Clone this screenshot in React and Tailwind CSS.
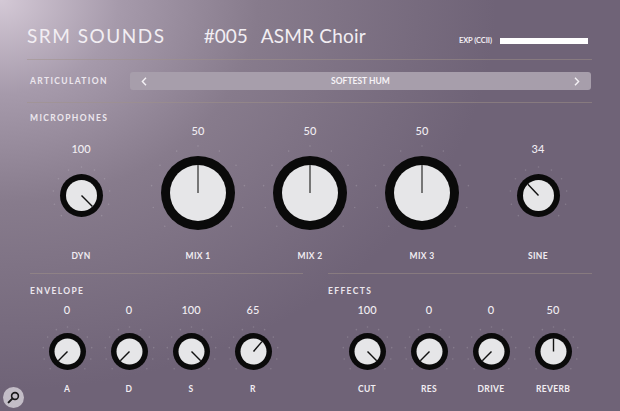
import React from "react";

const FONT = { fontFamily: "Lato, 'Open Sans', sans-serif" };

// A rotary knob: black ring, pale cap, needle showing the value (0..100 maps to -135..135deg)
function Knob({ outer, inner, value, needle = "#111", needleWidth = 1.4, needleLen, tickGap = 8 }) {
  const size = outer * 2;
  const c = outer;
  const a = ((-135 + (value / 100) * 270) * Math.PI) / 180;
  const len = needleLen ?? inner;
  const x2 = c + len * Math.sin(a);
  const y2 = c - len * Math.cos(a);
  const ticks = [];
  for (let i = 0; i < 11; i++) {
    const t = ((-135 + i * 27) * Math.PI) / 180;
    const r = outer + tickGap;
    ticks.push(
      <circle key={i} cx={c + r * Math.sin(t)} cy={c - r * Math.cos(t)} r="0.8" fill="#ffffff" opacity="0.16" />
    );
  }
  return (
    <svg width={size} height={size} viewBox={`0 0 ${size} ${size}`} className="overflow-visible block">
      {ticks}
      <circle cx={c} cy={c} r={outer} fill="#0a0a0a" />
      <circle cx={c} cy={c} r={inner} fill="#e6e6e8" />
      <line x1={c} y1={c} x2={x2} y2={y2} stroke={needle} strokeWidth={needleWidth} />
    </svg>
  );
}

function MicKnob({ value, label, big }) {
  return (
    <div className="w-[112px] flex flex-col items-center">
      <div className="text-[11px] leading-[14px] font-medium text-[#f1edf2]">{value}</div>
      <div className="mt-[18px]">
        {big ? (
          <Knob outer={37} inner={28} value={value} needle="#767676" needleWidth={2} tickGap={10} />
        ) : (
          <Knob outer={21.5} inner={15.5} value={value} tickGap={7} />
        )}
      </div>
      <div className={`${big ? "mt-[20px]" : "mt-[33px]"} text-[8.5px] leading-[12px] font-bold tracking-[0.04em] text-[#f1edf2]`}>
        {label}
      </div>
    </div>
  );
}

function SmallKnob({ value, label }) {
  return (
    <div className="w-[62px] flex flex-col items-center">
      <div className="text-[11px] leading-[14px] font-medium text-[#f1edf2]">{value}</div>
      <div className="mt-[16px]">
        <Knob outer={18.5} inner={13} value={value} tickGap={6} />
      </div>
      <div className="mt-[13px] text-[8.5px] leading-[12px] font-bold tracking-[0.04em] text-[#f1edf2]">{label}</div>
    </div>
  );
}

function Rule({ className = "" }) {
  return <div className={`h-px bg-[#a09288] opacity-50 ${className}`} />;
}

export default function App() {
  return (
    <div
      style={FONT}
      className="relative w-[620px] h-[411px] overflow-hidden flex flex-col text-[#f1edf2] bg-[#6f6377] bg-[radial-gradient(ellipse_80%_95%_at_0%_0%,#d4c9d6_0%,#a69aab_24%,#877b8c_52%,#6f6377_100%)]"
    >
      {/* title bar */}
      <div className="h-[59px] pt-[24px] pl-[27px] pr-[32px] flex items-baseline">
        <span className="text-[19px] leading-[24px] tracking-[0.08em] font-normal text-[#f2eef3]">SRM SOUNDS</span>
        <span className="ml-[38px] text-[19px] leading-[24px] font-normal text-[#f2eef3]">#005</span>
        <span className="ml-[13px] text-[19px] leading-[24px] tracking-[0.01em] font-normal text-[#f2eef3]">ASMR Choir</span>
        <div className="ml-auto flex items-center">
          <span className="text-[7.5px] font-bold tracking-[-0.01em] text-[#f2eef3]">EXP (CCII)</span>
          <div className="ml-[8px] w-[88px] h-[6px] bg-white" />
        </div>
      </div>
      <Rule className="ml-[27px] mr-[28px]" />

      {/* articulation selector */}
      <div className="h-[42px] pl-[30px] pr-[29px] flex items-center">
        <div className="w-[100px] text-[8.5px] font-bold tracking-[0.16em] text-[#ece7ee]">ARTICULATION</div>
        <div className="flex-1 h-[18px] rounded-[3px] bg-[#a79eab] flex items-center justify-between px-[11px]">
          <svg width="6" height="9" viewBox="0 0 6 9">
            <path d="M5 0.8 L1.4 4.5 L5 8.2" fill="none" stroke="#f4f1f5" strokeWidth="1.4" />
          </svg>
          <span className="text-[8.5px] font-bold text-[#f6f3f7]">SOFTEST HUM</span>
          <svg width="6" height="9" viewBox="0 0 6 9">
            <path d="M1 0.8 L4.6 4.5 L1 8.2" fill="none" stroke="#f4f1f5" strokeWidth="1.4" />
          </svg>
        </div>
      </div>
      <Rule className="ml-[27px] mr-[28px]" />

      {/* microphones */}
      <div className="pt-[9px] pl-[30px] text-[8.5px] leading-[12px] font-bold tracking-[0.16em] text-[#ece7ee]">MICROPHONES</div>
      <div className="flex items-start pl-[25px]">
        <div className="pt-[18px]">
          <MicKnob value={100} label="DYN" />
        </div>
        <div className="ml-[5px] flex">
          <MicKnob value={50} label="MIX 1" big />
          <MicKnob value={50} label="MIX 2" big />
          <MicKnob value={50} label="MIX 3" big />
        </div>
        <div className="ml-[4px] pt-[18px]">
          <MicKnob value={34} label="SINE" />
        </div>
      </div>

      {/* envelope & effects */}
      <div className="mt-[11px] flex">
        <div className="ml-[30px] w-[273px] flex flex-col">
          <Rule />
          <div className="pt-[11px] text-[8.5px] leading-[12px] font-bold tracking-[0.16em] text-[#ece7ee]">ENVELOPE</div>
          <div className="mt-[6px] ml-[6px] flex">
            <SmallKnob value={0} label="A" />
            <SmallKnob value={0} label="D" />
            <SmallKnob value={100} label="S" />
            <SmallKnob value={65} label="R" />
          </div>
        </div>
        <div className="ml-[25px] w-[264px] flex flex-col">
          <Rule />
          <div className="pt-[11px] text-[8.5px] leading-[12px] font-bold tracking-[0.16em] text-[#ece7ee]">EFFECTS</div>
          <div className="mt-[6px] ml-[8px] flex">
            <SmallKnob value={100} label="CUT" />
            <SmallKnob value={0} label="RES" />
            <SmallKnob value={0} label="DRIVE" />
            <SmallKnob value={50} label="REVERB" />
          </div>
        </div>
      </div>

      {/* zoom badge in the corner */}
      <div className="absolute left-[3px] top-[387px] w-[21px] h-[21px] rounded-full bg-[#cdc7d0] opacity-90 flex items-center justify-center">
        <svg width="13" height="13" viewBox="0 0 13 13">
          <circle cx="8" cy="5" r="3.4" fill="none" stroke="#111" strokeWidth="1.6" />
          <line x1="5.6" y1="7.4" x2="1.6" y2="11.4" stroke="#111" strokeWidth="2" strokeLinecap="round" />
        </svg>
      </div>
    </div>
  );
}
